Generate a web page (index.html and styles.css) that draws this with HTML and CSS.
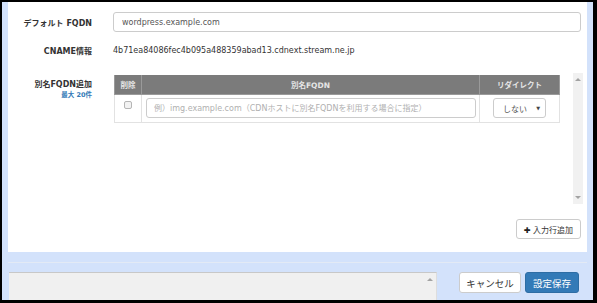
FILE: index.html
```html
<!DOCTYPE html>
<html lang="ja">
<head>
  <meta charset="UTF-8" />
  <title>FQDN設定</title>
  <link rel="stylesheet" href="styles.css">
</head>
<body>
  <div class="frame">
    <div class="panel">
      <div class="row row-fqdn">
        <div class="label">デフォルト FQDN</div>
        <div class="field">
          <input class="text-input" type="text" value="wordpress.example.com" />
        </div>
      </div>

      <div class="row row-cname">
        <div class="label">CNAME情報</div>
        <div class="field value">4b71ea84086fec4b095a488359abad13.cdnext.stream.ne.jp</div>
      </div>

      <div class="row row-alias">
        <div class="label">
          別名FQDN追加
          <small class="limit">最大 20件</small>
        </div>
        <div class="field">
          <div class="table-box">
            <div class="table-scroll">
              <table class="alias-table">
                <thead>
                  <tr>
                    <th class="col-del">削除</th>
                    <th class="col-fqdn">別名FQDN</th>
                    <th class="col-redirect">リダイレクト</th>
                  </tr>
                </thead>
                <tbody>
                  <tr>
                    <td class="col-del"><span class="check"></span></td>
                    <td class="col-fqdn">
                      <input class="text-input cell-input" type="text" placeholder="例）img.example.com（CDNホストに別名FQDNを利用する場合に指定）" />
                    </td>
                    <td class="col-redirect">
                      <div class="select">しない <span class="caret">▼</span></div>
                    </td>
                  </tr>
                </tbody>
              </table>
            </div>
            <div class="scrollbar">
              <span class="arrow arrow-up"></span>
              <span class="arrow arrow-down"></span>
            </div>
          </div>
          <div class="add-row">
            <button class="btn btn-small" type="button"><span class="plus">✚</span> 入力行追加</button>
          </div>
        </div>
      </div>
    </div>

    <div class="footer">
      <div class="memo"><span class="arrow arrow-up"></span></div>
      <div class="actions">
        <button class="btn" type="button">キャンセル</button>
        <button class="btn btn-primary" type="button">設定保存</button>
      </div>
    </div>
  </div>
</body>
</html>
```

FILE: styles.css
```css
* {
  box-sizing: border-box;
}

html, body {
  margin: 0;
  height: 100%;
  background: #000;
}

body {
  font-family: 'DejaVu Sans', 'Noto Sans CJK JP', sans-serif;
  font-size: 8px;
  color: #333;
}

.frame {
  height: 303px;
  border-style: solid;
  border-color: #000;
  border-width: 2px 4px 3px 2px;
  background: #d3e2fb;
  padding: 0 6px;
  display: flex;
  flex-direction: column;
  overflow: hidden;
}

.panel {
  background: #fff;
  height: 250px;
  padding: 10px 6px 13px 0;
}

.row {
  display: flex;
  align-items: center;
}

.label {
  width: 84px;
  margin-right: 21px;
  text-align: right;
  font-weight: bold;
  font-size: 8px;
  color: #333;
  flex-shrink: 0;
}

.field {
  flex: 1;
}

.text-input {
  width: 100%;
  height: 20px;
  border: 1px solid #ccc;
  border-radius: 3px;
  padding: 0 8px;
  font-family: 'DejaVu Sans', 'Noto Sans CJK JP', sans-serif;
  font-size: 8px;
  color: #555;
  background: #fff;
  outline: none;
}

.text-input::placeholder {
  color: #b0b0b0;
}

.row-cname {
  margin-top: 8px;
  height: 20px;
}

.value {
  font-size: 8px;
  color: #333;
}

.row-alias {
  margin-top: 13px;
  align-items: flex-start;
}

.row-alias .label {
  padding-top: 6px;
  line-height: 11px;
}

.limit {
  display: block;
  font-size: 6.5px;
  color: #337ab7;
  font-weight: bold;
}

.table-box {
  display: flex;
  height: 131px;
  margin-right: -2px;
}

.table-scroll {
  flex: 1;
  padding: 2px 0 0 1px;
}

.alias-table {
  width: 446px;
  border-collapse: collapse;
  table-layout: fixed;
}

.alias-table th {
  background: #7b7b7b;
  color: #e6e6e6;
  font-weight: bold;
  font-size: 7.5px;
  height: 19px;
  border: 1px solid #9a9a9a;
  border-top: none;
  padding: 0;
}

.alias-table td {
  height: 28px;
  border: 1px solid #e2e2e2;
  padding: 0;
  text-align: center;
}

.col-del {
  width: 27px;
}

.col-redirect {
  width: 80px;
}

.alias-table td.col-del {
  vertical-align: top;
  padding-top: 6px;
}

.check {
  display: inline-block;
  width: 8px;
  height: 8px;
  border: 1px solid #b5b5b5;
  border-radius: 2px;
  background: #f2f2f2;
}

.alias-table td.col-fqdn {
  padding: 0 3px 0 4px;
}

.cell-input {
  padding: 0 7px;
}

.select {
  display: inline-flex;
  align-items: center;
  justify-content: space-between;
  width: 53px;
  height: 20px;
  padding: 0 5px 0 9px;
  border: 1px solid #ccc;
  border-radius: 3px;
  background: #fff;
  color: #555;
  font-size: 8px;
  text-align: left;
}

.caret {
  font-size: 5px;
  color: #444;
}

.scrollbar {
  width: 10px;
  background: #f1f1f1;
  position: relative;
}

.arrow {
  position: absolute;
  left: 2px;
  width: 0;
  height: 0;
  border-left: 3px solid transparent;
  border-right: 3px solid transparent;
}

.arrow-up {
  top: 5px;
  border-bottom: 3px solid #a3a3a3;
}

.arrow-down {
  bottom: 5px;
  border-top: 3px solid #a3a3a3;
}

.add-row {
  display: flex;
  justify-content: flex-end;
  margin-top: 15px;
}

.btn {
  background: #fff;
  border: 1px solid #ccc;
  border-radius: 3px;
  font-family: 'DejaVu Sans', 'Noto Sans CJK JP', sans-serif;
  font-size: 9.5px;
  color: #333;
  padding: 0;
  height: 21px;
  cursor: pointer;
}

.btn-small {
  width: 65px;
  height: 20px;
  font-size: 8px;
}

.plus {
  font-size: 8px;
  color: #222;
}

.footer {
  flex: 1;
  border-top: 1px solid #e3eaf5;
  margin-top: 10px;
  padding: 9px 8px 0 1px;
  display: flex;
  gap: 22px;
}

.memo {
  width: 428px;
  background: #f0f0f0;
  border-top: 1px solid #c8c8c8;
  border-right: 1px solid #ddd;
  position: relative;
}

.memo .arrow {
  left: auto;
  right: 3px;
  top: 5px;
}

.actions {
  display: flex;
  gap: 4px;
  align-items: flex-start;
}

.actions .btn {
  width: 62px;
}

.actions .btn-primary {
  width: 54px;
  background: #337ab7;
  border-color: #2e6da4;
  color: #fff;
}
```
